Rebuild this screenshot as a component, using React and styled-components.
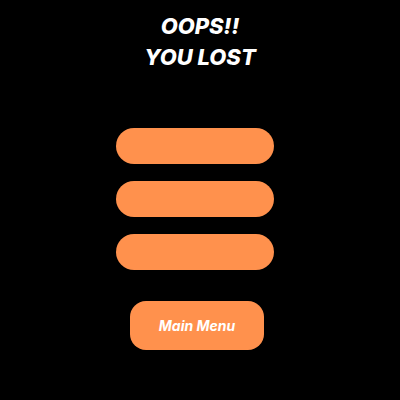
import React from "react";
import styled, { createGlobalStyle } from "styled-components";

const Global = createGlobalStyle`
  html, body { margin: 0; padding: 0; background: #000; }
  body { font-family: Inter, "Liberation Sans", sans-serif; }
`;

const Screen = styled.div`
  width: 400px;
  height: 400px;
  background: #000;
  display: flex;
  flex-direction: column;
  align-items: center;
`;

const Title = styled.h1`
  margin: 11px 0 0;
  color: #fff;
  font-family: Inter, "Liberation Sans", sans-serif;
  font-style: italic;
  font-weight: 800;
  font-size: 22px;
  line-height: 31px;
  text-align: center;
`;

const Bars = styled.div`
  margin: 55px 10px 0 0;
  display: flex;
  flex-direction: column;
  gap: 17px;
`;

const Bar = styled.div`
  width: 158px;
  height: 36px;
  border-radius: 18px;
  background: #ff914d;
`;

const MenuButton = styled.button`
  margin: 31px 6px 0 0;
  width: 134px;
  height: 49px;
  border: none;
  border-radius: 16px;
  background: #ff914d;
  color: #fff;
  font-family: Inter, "Liberation Sans", sans-serif;
  font-style: italic;
  font-weight: 700;
  font-size: 14px;
  padding: 0;
  cursor: pointer;
`;

export default function App() {
  return (
    <>
      <Global />
      <Screen>
        <Title>
          OOPS!!
          <br />
          YOU LOST
        </Title>
        <Bars>
          <Bar />
          <Bar />
          <Bar />
        </Bars>
        <MenuButton>Main Menu</MenuButton>
      </Screen>
    </>
  );
}
